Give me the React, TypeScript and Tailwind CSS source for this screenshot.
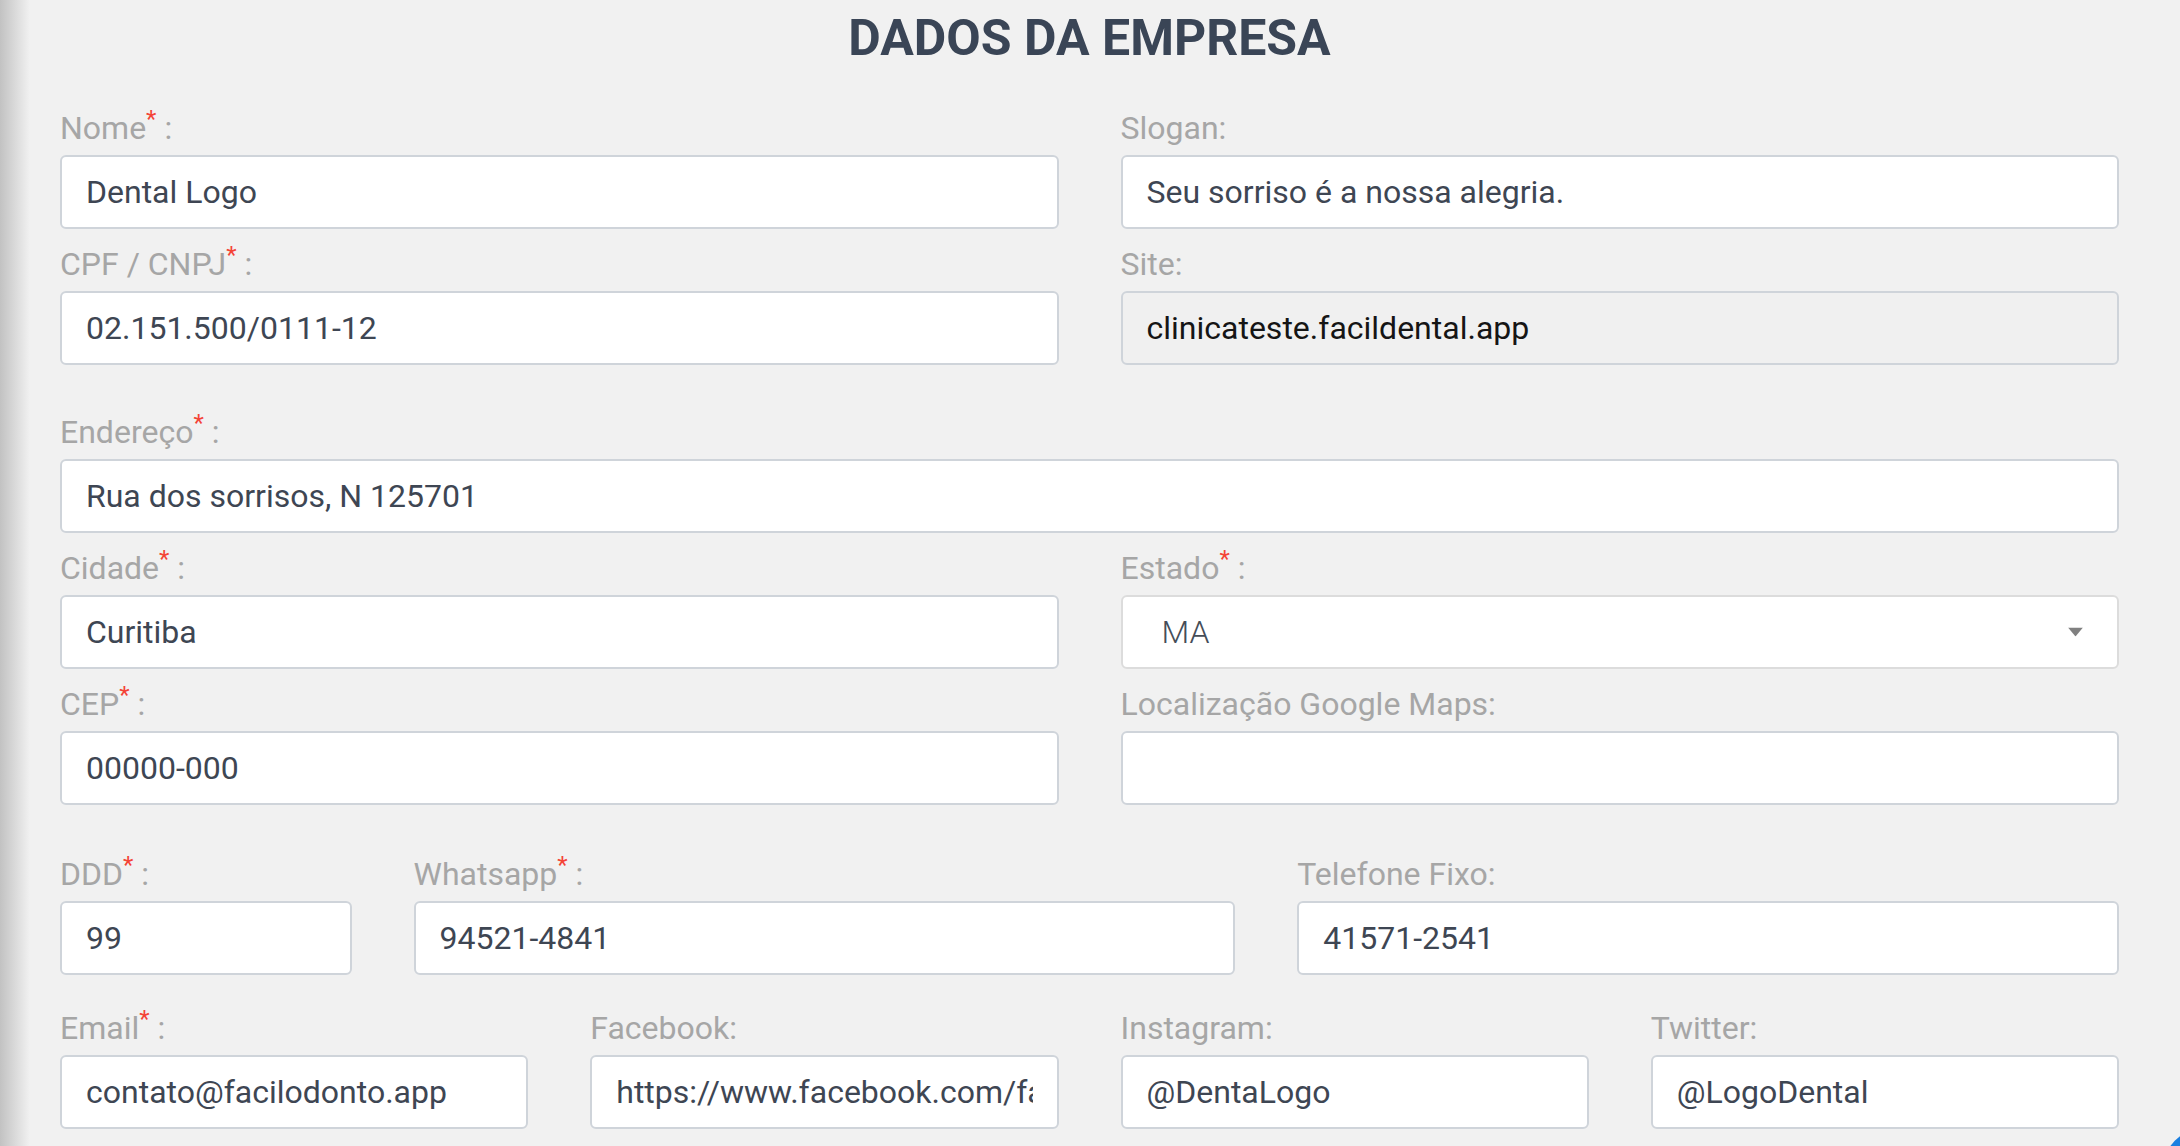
import React from 'react';

type Field = {
  label: string;
  value: string;
  required?: boolean;
  span: string;
  disabled?: boolean;
  select?: boolean;
};

const companyInfo: Field[] = [
  { label: 'Nome', value: 'Dental Logo', required: true, span: 'col-span-6' },
  { label: 'Slogan', value: 'Seu sorriso é a nossa alegria.', span: 'col-span-6' },
  { label: 'CPF / CNPJ', value: '02.151.500/0111-12', required: true, span: 'col-span-6' },
  { label: 'Site', value: 'clinicateste.facildental.app', span: 'col-span-6', disabled: true },
];

const address: Field[] = [
  { label: 'Endereço', value: 'Rua dos sorrisos, N 125701', required: true, span: 'col-span-12' },
  { label: 'Cidade', value: 'Curitiba', required: true, span: 'col-span-6' },
  { label: 'Estado', value: 'MA', required: true, span: 'col-span-6', select: true },
  { label: 'CEP', value: '00000-000', required: true, span: 'col-span-6' },
  { label: 'Localização Google Maps', value: '', span: 'col-span-6' },
];

const phones: Field[] = [
  { label: 'DDD', value: '99', required: true, span: 'col-span-2' },
  { label: 'Whatsapp', value: '94521-4841', required: true, span: 'col-span-5' },
  { label: 'Telefone Fixo', value: '41571-2541', span: 'col-span-5' },
];

const social: Field[] = [
  { label: 'Email', value: 'contato@facilodonto.app', required: true, span: 'col-span-3' },
  { label: 'Facebook', value: 'https://www.facebook.com/facilodonto', span: 'col-span-3' },
  { label: 'Instagram', value: '@DentaLogo', span: 'col-span-3' },
  { label: 'Twitter', value: '@LogoDental', span: 'col-span-3' },
];

const estados = ['AC', 'AL', 'AM', 'BA', 'CE', 'DF', 'ES', 'GO', 'MA', 'MG', 'MS', 'MT', 'PA', 'PR', 'RJ', 'SP'];

function FormField({ field }: { field: Field }) {
  return (
    <div className={field.span}>
      <label className="block h-[40px] text-[32px] leading-[34px] text-[#a6a6a6] whitespace-nowrap">
        {field.label}
        {field.required ? (
          <>
            <sup className="text-[#f44336]">*</sup> :
          </>
        ) : (
          ':'
        )}
      </label>
      {field.select ? (
        <div className="relative mt-[4px]">
          <select
            defaultValue={field.value}
            className="h-[74px] w-full appearance-none rounded-[6px] border-2 border-[#dcdcdc] bg-white pl-[39px] text-[32px] font-light text-[#454d58] outline-none"
          >
            {estados.map((uf) => (
              <option key={uf} value={uf}>
                {uf}
              </option>
            ))}
          </select>
          <svg
            className="pointer-events-none absolute right-[36px] top-1/2 -translate-y-1/2"
            width="15"
            height="9"
            viewBox="0 0 15 9"
          >
            <polygon points="0,0 15,0 7.5,9" fill="#808080" />
          </svg>
        </div>
      ) : (
        <input
          readOnly
          value={field.value}
          className={
            'mt-[4px] block h-[74px] w-full rounded-[6px] border-2 border-[#cfd4da] px-[24px] text-[32px] outline-none ' +
            (field.disabled ? 'bg-[#f0f0f0] text-[#151515]' : 'bg-white text-[#3e4653]')
          }
        />
      )}
    </div>
  );
}

export default function App() {
  return (
    <div className="relative min-h-screen overflow-hidden bg-[#f1f1f1] font-[Roboto,'Noto_Sans',sans-serif]">
      {/* sidebar shadow */}
      <div className="pointer-events-none absolute inset-y-0 left-0 w-[30px] bg-gradient-to-r from-[#c2c2c2] to-[#f1f1f1]/0" />

      <div className="pl-[60px] pr-[61px] pt-[8px] pb-[60px]">
        <h1 className="text-center text-[50px] font-bold leading-[60px] text-[#3a4556]">DADOS DA EMPRESA</h1>

        <div className="mt-[43px] grid grid-cols-12 gap-x-[62px] gap-y-[18px]">
          {companyInfo.map((f) => (
            <FormField key={f.label} field={f} />
          ))}
        </div>

        <div className="mt-[50px] grid grid-cols-12 gap-x-[62px] gap-y-[18px]">
          {address.map((f) => (
            <FormField key={f.label} field={f} />
          ))}
        </div>

        <div className="mt-[52px] grid grid-cols-12 gap-x-[62px]">
          {phones.map((f) => (
            <FormField key={f.label} field={f} />
          ))}
        </div>

        <div className="mt-[36px] grid grid-cols-12 gap-x-[62px]">
          {social.map((f) => (
            <FormField key={f.label} field={f} />
          ))}
        </div>
      </div>

      {/* floating action button peeking from the corner */}
      <div className="fixed -bottom-[63px] -right-[63px] h-[80px] w-[80px] rounded-full bg-[#1a7fe0]" />
    </div>
  );
}
